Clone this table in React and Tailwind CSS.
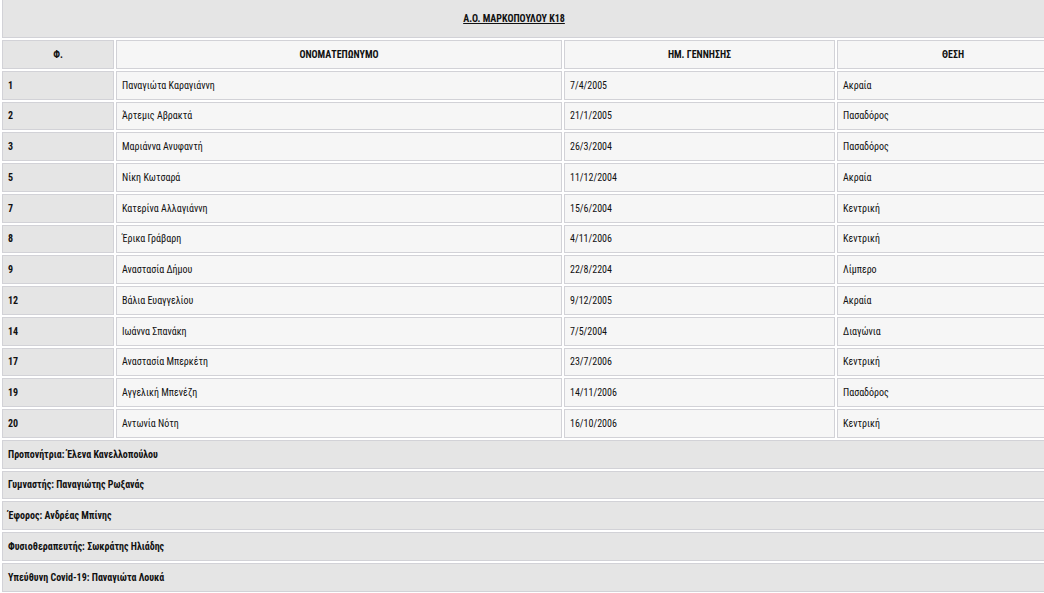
import React from "react";

const players = [
  { no: "1", name: "Παναγιώτα Καραγιάννη", born: "7/4/2005", pos: "Ακραία" },
  { no: "2", name: "Άρτεμις Αβρακτά", born: "21/1/2005", pos: "Πασαδόρος" },
  { no: "3", name: "Μαριάννα Ανυφαντή", born: "26/3/2004", pos: "Πασαδόρος" },
  { no: "5", name: "Νίκη Κωτσαρά", born: "11/12/2004", pos: "Ακραία" },
  { no: "7", name: "Κατερίνα Αλλαγιάννη", born: "15/6/2004", pos: "Κεντρική" },
  { no: "8", name: "Έρικα Γράβαρη", born: "4/11/2006", pos: "Κεντρική" },
  { no: "9", name: "Αναστασία Δήμου", born: "22/8/2204", pos: "Λίμπερο" },
  { no: "12", name: "Βάλια Ευαγγελίου", born: "9/12/2005", pos: "Ακραία" },
  { no: "14", name: "Ιωάννα Σπανάκη", born: "7/5/2004", pos: "Διαγώνια" },
  { no: "17", name: "Αναστασία Μπερκέτη", born: "23/7/2006", pos: "Κεντρική" },
  { no: "19", name: "Αγγελική Μπενέζη", born: "14/11/2006", pos: "Πασαδόρος" },
  { no: "20", name: "Αντωνία Νότη", born: "16/10/2006", pos: "Κεντρική" },
];

const staff = [
  "Προπονήτρια: Έλενα Κανελλοπούλου",
  "Γυμναστής: Παναγιώτης Ρωξανάς",
  "Έφορος: Ανδρέας Μπίνης",
  "Φυσιοθεραπευτής: Σωκράτης Ηλιάδης",
  "Υπεύθυνη Covid-19: Παναγιώτα Λουκά",
];

const cell = "h-[28.75px] flex items-center border border-[#d2d2d7] px-[5px]";

export default function App() {
  return (
    <div className="w-[1044px] h-[593px] overflow-hidden bg-white font-['Roboto_Condensed','Roboto',sans-serif] text-[10px] text-[#111]">
      <div className="w-[1070px] pl-[2px] flex flex-col gap-[2px]">
        <div className="h-[38px] flex items-center justify-center bg-[#e5e5e5] border-x border-b border-[#d2d2d7] pr-[44px]">
          <span className="font-bold underline">Α.Ο. ΜΑΡΚΟΠΟΥΛΟΥ Κ18</span>
        </div>

        <div className="grid grid-cols-[112px_446px_271px_232px] gap-[2px]">
          <div className={`${cell} justify-center bg-[#e5e5e5] font-bold`}>Φ.</div>
          <div className={`${cell} justify-center bg-[#f6f6f6] font-bold`}>ΟΝΟΜΑΤΕΠΩΝΥΜΟ</div>
          <div className={`${cell} justify-center bg-[#f6f6f6] font-bold`}>ΗΜ. ΓΕΝΝΗΣΗΣ</div>
          <div className={`${cell} justify-center bg-[#f6f6f6] font-bold`}>ΘΕΣΗ</div>

          {players.map((p) => (
            <React.Fragment key={p.no}>
              <div className={`${cell} bg-[#e5e5e5] font-bold`}>{p.no}</div>
              <div className={`${cell} bg-[#f6f6f6]`}>{p.name}</div>
              <div className={`${cell} bg-[#f6f6f6]`}>{p.born}</div>
              <div className={`${cell} bg-[#f6f6f6]`}>{p.pos}</div>
            </React.Fragment>
          ))}
        </div>

        {staff.map((s) => (
          <div key={s} className={`${cell} bg-[#e5e5e5] font-bold`}>
            {s}
          </div>
        ))}
      </div>
    </div>
  );
}
